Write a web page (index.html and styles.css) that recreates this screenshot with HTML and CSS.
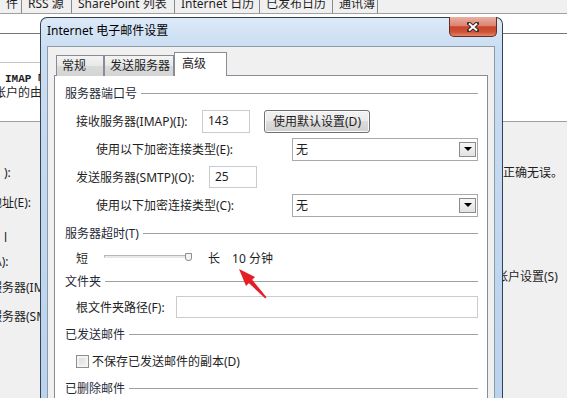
FILE: index.html
```html
<!DOCTYPE html>
<html>
<head>
  <title>Internet 电子邮件设置</title>
  <link rel="stylesheet" href="styles.css">
</head>
<body>

  <div class="screen">
    <!-- background: account settings window behind the dialog -->
    <div class="strip">
      <span class="stab">件</span>
      <span class="stab">RSS 源</span>
      <span class="stab">SharePoint 列表</span>
      <span class="stab">Internet 日历</span>
      <span class="stab">已发布日历</span>
      <span class="stab">通讯簿</span>
    </div>

    <div class="band-white">
      <div class="bw-head"></div>
      <div class="bw-left">
        <div class="bw-rule"></div>
        <p class="bold">IMAP 帐</p>
        <p class="cut">帐户的由</p>
      </div>
    </div>

    <div class="band-gray">
      <div class="lcol">
        <p class="l1">):</p>
        <p class="l2">地址(E):</p>
        <p class="l3">l</p>
        <p class="l4">A):</p>
        <p class="l5">服务器(IMAP)</p>
        <p class="l6">服务器(SMTP)</p>
      </div>
      <div class="rcol">
        <p class="r1">正确无误。</p>
        <p class="r2">帐户设置(S)</p>
      </div>
    </div>

    <!-- dialog -->
    <div class="dialog">
      <div class="titlebar">
        <span class="title">Internet 电子邮件设置</span>
        <div class="close">
          <svg width="12" height="10" viewBox="0 0 12 10">
            <path d="M2 1.5 L10 8.5 M10 1.5 L2 8.5" stroke="#3a2a28" stroke-width="4" stroke-linecap="square"/>
            <path d="M2 1.5 L10 8.5 M10 1.5 L2 8.5" stroke="#fff" stroke-width="2"/>
          </svg>
        </div>
      </div>

      <div class="client">
        <div class="tabs">
          <div class="tab t1">常规</div>
          <div class="tab t2">发送服务器</div>
          <div class="tab sel">高级</div>
        </div>

        <div class="panel">
          <div class="sec">服务器端口号</div>

          <div class="row">
            <span class="lbl w-imap">接收服务器(IMAP)(I):</span>
            <span class="box port tall">143</span>
            <span class="btn">使用默认设置(D)</span>
          </div>

          <div class="row sub">
            <span class="lbl w-enc">使用以下加密连接类型(E):</span>
            <span class="select">无<span class="drop"></span></span>
          </div>

          <div class="row">
            <span class="lbl w-smtp">发送服务器(SMTP)(O):</span>
            <span class="box port">25</span>
          </div>

          <div class="row sub">
            <span class="lbl w-enc">使用以下加密连接类型(C):</span>
            <span class="select">无<span class="drop"></span></span>
          </div>

          <div class="sec">服务器超时(T)</div>

          <div class="row slider-row">
            <span>短</span>
            <span class="track"><span class="thumb"></span></span>
            <span class="long">长</span>
            <span class="mins">10 分钟</span>
          </div>

          <div class="sec short">文件夹</div>

          <div class="row tight">
            <span class="lbl w-root">根文件夹路径(F):</span>
            <span class="box wide"></span>
          </div>

          <div class="sec">已发送邮件</div>

          <div class="row tight">
            <span class="check"></span>
            <span class="check-lbl">不保存已发送邮件的副本(D)</span>
          </div>

          <div class="sec">已删除邮件</div>
        </div>
      </div>
    </div>

    <!-- red annotation arrow -->
    <svg class="arrow" width="567" height="398" viewBox="0 0 567 398">
      <polygon points="239,269 255,277 246,286" fill="#e51e25"/>
      <polygon points="252,279.5 248.5,282.8 265.3,298.5 266.5,297.2" fill="#e51e25"/>
    </svg>
  </div>

</body>
</html>
```

FILE: styles.css
```css
body {
  margin: 0;
  font-family: "Noto Sans", "Noto Sans CJK SC", sans-serif;
  font-size: 12px;
  color: #1e1e1e;
}

p {
  margin: 0;
}

.screen {
  position: relative;
  width: 567px;
  height: 398px;
  overflow: hidden;
  background: #f0f0f0;
}

/* background window */
.strip {
  height: 13px;
  border-bottom: 1px solid #a0a0a0;
  background: #f0f0f0;
  display: grid;
  grid-template-columns: 22px 50px 103px 85px 73px 45px;
  overflow: hidden;
}

.stab {
  height: 13px;
  line-height: 7px;
  padding-left: 6px;
  border-right: 1px solid #8a8a8a;
  white-space: nowrap;
  overflow: hidden;
}

.band-white {
  height: 107px;
  background: #fff;
  border-bottom: 1px solid #a0a0a0;
}

.bw-head {
  height: 19px;
  border-bottom: 1px solid #767676;
}

.bw-left {
  width: 40px;
  overflow: hidden;
  white-space: nowrap;
}

.bw-rule {
  height: 28px;
  border-bottom: 1px solid #c4c4c4;
}

.bw-left p {
  line-height: 14px;
}

.bold {
  margin-top: 9px !important;
  padding-left: 5px;
  font-family: "Liberation Mono", "Noto Sans CJK SC", monospace;
  font-weight: bold;
  font-size: 11px;
}

.cut {
  margin-left: -6px;
}

.band-gray {
  display: flex;
}

.lcol {
  width: 40px;
  overflow: hidden;
  white-space: nowrap;
}

.lcol p,
.rcol p {
  line-height: 16px;
  white-space: nowrap;
}

.l1 { margin-top: 43px; padding-left: 4px; }
.l2 { margin-top: 14px; margin-left: -10px; }
.l3 { margin-top: 19px; padding-left: 4px; }
.l4 { margin-top: 8px; margin-left: -6px; }
.l5 { margin-top: 10px; margin-left: -10px; }
.l6 { margin-top: 13px; margin-left: -10px; }

.rcol {
  margin-left: 456px;
}

.r1 { margin-top: 43px; margin-left: 7px; }
.r2 { margin-top: 88px; }

/* dialog window */
.dialog {
  position: absolute;
  left: 40px;
  top: 17px;
  width: 463px;
  height: 400px;
  box-sizing: border-box;
  border: 1px solid #35414e;
  border-bottom: none;
  border-radius: 7px 7px 0 0;
  background: linear-gradient(to bottom, #dce9f7, #c9ddf3 30px, #b9d2ee);
  padding: 0 7px 0 6px;
  display: flex;
  flex-direction: column;
}

.titlebar {
  height: 28px;
  display: flex;
  align-items: flex-start;
}

.title {
  margin-top: 5px;
  line-height: 16px;
  color: #000;
}

.close {
  margin-left: auto;
  margin-top: -1px;
  margin-right: -2px;
  width: 48px;
  height: 20px;
  box-sizing: border-box;
  border: 1px solid #6a2a1e;
  border-top: none;
  border-radius: 0 0 5px 5px;
  background: linear-gradient(to bottom, #eab0a3, #dc8470 45%, #c8452b 52%, #cf5438 80%, #e3876c);
  display: flex;
  align-items: center;
  justify-content: center;
}

.client {
  flex: 1;
  background: #f0f0f0;
  border: 1px solid #8e9aa6;
  border-bottom: none;
  padding: 5px 6px 0 6px;
  display: flex;
  flex-direction: column;
}

.tabs {
  display: flex;
  align-items: flex-start;
  height: 24px;
  margin-bottom: -1px;
  padding-left: 2px;
  position: relative;
  z-index: 1;
}

.tab {
  box-sizing: border-box;
  height: 21px;
  margin-top: 3px;
  padding-left: 5px;
  line-height: 19px;
  border: 1px solid #898c95;
  border-bottom: none;
  background: linear-gradient(to bottom, #f4f4f4, #e8e8e8 50%, #dadada 52%, #d4d4d4);
  white-space: nowrap;
}

.t1 { width: 48px; }
.t2 { width: 70px; }

.tab.sel {
  width: 53px;
  height: 24px;
  margin-top: 0;
  padding-left: 7px;
  line-height: 22px;
  background: #fff;
}

.panel {
  flex: 1;
  background: #fff;
  border: 1px solid #898c95;
  padding: 3px 9px 0 10px;
}

.sec {
  height: 28px;
  display: flex;
  align-items: center;
  white-space: nowrap;
  color: #1f2a38;
}

.sec::after {
  content: "";
  flex: 1;
  height: 1px;
  margin-left: 4px;
  background: #a0a0a0;
}

.sec.short {
  height: 26px;
}

.row {
  height: 28px;
  display: flex;
  align-items: center;
  padding-left: 11px;
  white-space: nowrap;
}

.row.sub {
  padding-left: 31px;
}

.row.tight {
  height: 26px;
}

.lbl {
  flex: none;
}

.w-imap { width: 126px; }
.w-smtp { width: 133px; }
.w-enc { width: 196px; }
.w-root { width: 100px; }

.box {
  box-sizing: border-box;
  height: 22px;
  border: 1px solid #c9cbd1;
  background: #fff;
  padding-left: 5px;
  line-height: 20px;
}

.port {
  width: 48px;
}

.tall {
  height: 23px;
}

.wide {
  flex: 1;
}

.btn {
  box-sizing: border-box;
  width: 106px;
  height: 23px;
  margin-left: 14px;
  border: 1px solid #707070;
  border-radius: 3px;
  background: linear-gradient(to bottom, #f2f2f2, #ebebeb 48%, #dddddd 50%, #cfcfcf);
  text-align: center;
  line-height: 21px;
  box-shadow: inset 0 0 0 1px #fbfbfb;
}

.select {
  box-sizing: border-box;
  width: 186px;
  height: 23px;
  border: 1px solid #a9a9a9;
  background: #fff;
  padding-left: 3px;
  display: flex;
  align-items: center;
}

.drop {
  box-sizing: border-box;
  width: 17px;
  height: 15px;
  margin-left: auto;
  margin-right: 1px;
  border: 1px solid #8c8c8c;
  background: linear-gradient(to bottom, #f6f6f6, #e2e2e2);
  display: flex;
  align-items: center;
  justify-content: center;
}

.drop::after {
  content: "";
  border-left: 4px solid transparent;
  border-right: 4px solid transparent;
  border-top: 4px solid #000;
}

.slider-row {
  height: 21px;
}

.track {
  position: relative;
  width: 88px;
  height: 3px;
  margin-left: 16px;
  margin-top: -3px;
  box-sizing: border-box;
  border: 1px solid #b7b7b7;
  border-bottom-color: #e6e6e6;
  background: #e7eaea;
}

.thumb {
  position: absolute;
  right: -1px;
  top: -3px;
  width: 5px;
  height: 6px;
  border: 1px solid #8d8d8d;
  border-radius: 0 0 3px 3px;
  background: #f4f4f4;
}

.long {
  margin-left: 16px;
}

.mins {
  margin-left: 12px;
}

.check {
  box-sizing: border-box;
  width: 13px;
  height: 13px;
  border: 1px solid #8f8f8f;
  background: linear-gradient(135deg, #d8d8d8, #f6f6f6);
  box-shadow: inset 0 0 0 2px #f4f4f4;
}

.check-lbl {
  margin-left: 3px;
}

.arrow {
  position: absolute;
  left: 0;
  top: 0;
  pointer-events: none;
}
```
